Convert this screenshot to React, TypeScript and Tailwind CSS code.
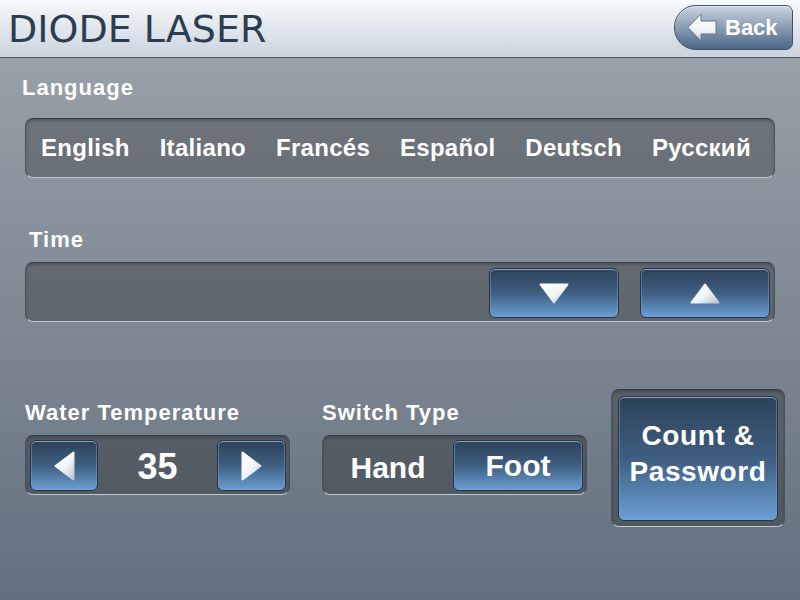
import React from "react";

type Dir = "up" | "down" | "left" | "right";

const Tri = ({ dir }: { dir: Dir }) => {
  const vertical = dir === "up" || dir === "down";
  const w = vertical ? 30 : 21;
  const h = vertical ? 21 : 30;
  const pts = {
    down: "1.5,1.5 28.5,1.5 15,19.5",
    up: "15,1.5 28.5,19.5 1.5,19.5",
    left: "1.5,15 19.5,1.5 19.5,28.5",
    right: "1.5,1.5 19.5,15 1.5,28.5",
  }[dir];
  const id = `tri-${dir}`;
  return (
    <svg width={w} height={h} viewBox={`0 0 ${w} ${h}`}>
      <defs>
        <linearGradient id={id} x1="0" y1="0" x2="1" y2="1">
          <stop offset="0" stopColor="#ffffff" />
          <stop offset="0.55" stopColor="#f2f5f8" />
          <stop offset="1" stopColor="#b7c2cf" />
        </linearGradient>
      </defs>
      <polygon points={pts} fill={`url(#${id})`} stroke={`url(#${id})`} strokeWidth="2" strokeLinejoin="round" />
    </svg>
  );
};

const BackArrow = () => (
  <svg width="30" height="29" viewBox="0 0 30 29">
    <defs>
      <linearGradient id="back-arrow" x1="0" y1="0" x2="0" y2="1">
        <stop offset="0" stopColor="#ffffff" />
        <stop offset="0.6" stopColor="#f1f4f7" />
        <stop offset="1" stopColor="#c3ccd6" />
      </linearGradient>
    </defs>
    <polygon
      points="1,14.5 14,1 14,8 29,8 29,21 14,21 14,28"
      fill="url(#back-arrow)"
      stroke="#5d7591"
      strokeWidth="1"
      strokeLinejoin="round"
    />
  </svg>
);

const BlueButton = ({ className, children }: { className: string; children: React.ReactNode }) => (
  <div
    className={`shrink-0 flex items-center justify-center rounded-[6px] border border-[#22344a] bg-linear-to-b from-[#2d425a] via-[#3f5e80] to-[#6a9fd6] shadow-[inset_0_1px_0_#90a5bb,inset_0_0_0_1px_rgba(140,165,195,0.45)] ${className}`}
  >
    {children}
  </div>
);

const panel =
  "rounded-[8px] border border-t-[#353c43] border-x-[#4a5158] border-b-[#c2c9cf] bg-black/25 shadow-[inset_0_2px_3px_rgba(0,0,0,0.22)]";

const label = "text-[22px] leading-[26px] font-bold tracking-[1px] text-white";

const languages = ["English", "Italiano", "Francés", "Español", "Deutsch", "Русский"];

export default function App() {
  return (
    <div className="w-[800px] h-[600px] overflow-hidden flex flex-col bg-linear-to-b from-[#9ea6ae] to-[#63707d] font-['Liberation_Sans',Arial,sans-serif]">
      {/* Header */}
      <div className="h-[58px] shrink-0 flex items-center justify-between pl-[8px] pr-[7px] border-b border-[#535b63] bg-linear-to-b from-[#f7f9fb] to-[#cad4de]">
        <div className="text-[38px] leading-[44px] text-[#2c3d52] font-['DejaVu_Sans',Verdana,sans-serif]">
          DIODE LASER
        </div>
        <div className="self-start mt-[5px] w-[119px] h-[45px] flex items-center pl-[12px] gap-[8px] rounded-l-[22px] rounded-r-[7px] border border-[#3a516a] bg-linear-to-b from-[#cbd4df] via-[#8b9db2] to-[#4b6687] shadow-[inset_0_1px_0_rgba(255,255,255,0.6)]">
          <BackArrow />
          <span className="text-[22px] font-bold text-white">Back</span>
        </div>
      </div>

      <div className="px-[25px] flex flex-col">
        {/* Language */}
        <div className={`${label} mt-[17px] -ml-[3px]`}>Language</div>
        <div className={`${panel} mt-[17px] h-[60px] flex items-center justify-between pl-[15px] pr-[23px]`}>
          {languages.map(l => (
            <span key={l} className="text-[24px] font-bold tracking-[0.3px] text-white">
              {l}
            </span>
          ))}
        </div>

        {/* Time */}
        <div className={`${label} mt-[49px] ml-[4px]`}>Time</div>
        <div className={`${panel} mt-[9px] h-[60px] flex justify-end items-start pt-[5px] pr-[4px] gap-[21px]`}>
          <BlueButton className="w-[130px] h-[50px]">
            <Tri dir="down" />
          </BlueButton>
          <BlueButton className="w-[130px] h-[50px]">
            <Tri dir="up" />
          </BlueButton>
        </div>

        {/* Bottom row */}
        <div className="mt-[67px] flex items-start">
          <div className="shrink-0 mt-[11px] w-[265px] flex flex-col">
            <div className={label}>Water Temperature</div>
            <div className={`${panel} mt-[9px] h-[60px] flex items-start pt-[4px] pl-[4px] pr-[3px]`}>
              <BlueButton className="w-[68px] h-[51px]">
                <Tri dir="left" />
              </BlueButton>
              <div className="flex-1 self-center text-center text-[36px] font-bold text-white">35</div>
              <BlueButton className="w-[69px] h-[51px]">
                <Tri dir="right" />
              </BlueButton>
            </div>
          </div>

          <div className="shrink-0 mt-[11px] ml-[32px] w-[265px] flex flex-col">
            <div className={label}>Switch Type</div>
            <div className={`${panel} mt-[9px] h-[60px] flex items-start pt-[4px] pr-[3px]`}>
              <div className="flex-1 self-center text-center text-[30px] font-bold text-white">Hand</div>
              <BlueButton className="w-[130px] h-[51px]">
                <span className="text-[30px] font-bold text-white">Foot</span>
              </BlueButton>
            </div>
          </div>

          <div className={`${panel} shrink-0 ml-[24px] w-[174px] h-[138px] flex p-[6px] pb-[5px]`}>
            <BlueButton className="flex-1 pb-[9px]">
              <span className="text-center text-[28px] leading-[36px] font-bold tracking-[0.6px] text-white">
                Count &amp;
                <br />
                Password
              </span>
            </BlueButton>
          </div>
        </div>
      </div>
    </div>
  );
}
